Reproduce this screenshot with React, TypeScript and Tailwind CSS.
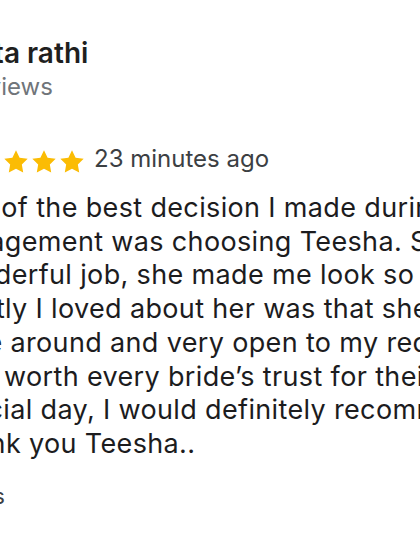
import React from "react";

const Star = () => (
  <svg width="28" height="28" viewBox="0 0 24 24" className="shrink-0">
    <path
      d="M12 2l3.09 6.26L22 9.27l-5 4.87 1.18 6.88L12 17.77l-6.18 3.25L7 14.14 2 9.27l6.91-1.01L12 2z"
      fill="#fbbc04"
    />
  </svg>
);

const lines = [
  "One of the best decision I made during my",
  "engagement was choosing Teesha. She did a",
  "wonderful job, she made me look so beautiful.",
  "Mostly I loved about her was that she was",
  "have around and very open to my requirements.",
  "fully worth every bride’s trust for their",
  "special day, I would definitely recommend her.",
  "Thank you Teesha..",
];

export default function App() {
  return (
    <div className="w-[420px] h-[560px] overflow-hidden bg-white" style={{ fontFamily: "Inter, 'Noto Sans', sans-serif" }}>
      <div className="flex flex-col ml-[-60px] w-[680px] pt-[37px]">
        <div className="ml-[2px] text-[28px] leading-[32px] font-semibold text-[#1f1f1f] whitespace-nowrap">
          Nikita rathi
        </div>
        <div className="mt-[4px] ml-[4px] text-[24px] leading-[28px] text-[#70757a] whitespace-nowrap">
          3 reviews
        </div>
        <div className="mt-[44px] flex items-start">
          <div className="flex ml-[6px] mt-[3px]">
            <Star />
            <Star />
            <Star />
            <Star />
            <Star />
          </div>
          <div className="ml-2 text-[24px] leading-[28px] text-[#3c4043] whitespace-nowrap">
            23 minutes ago
          </div>
        </div>
        <div className="mt-[15px] flex flex-col text-[27px] leading-[33.7px] tracking-[0.35px] text-[#1c1c1e]">
          {lines.map((l, i) => (
            <div key={i} className="whitespace-nowrap">
              {l}
            </div>
          ))}
        </div>
        <div className="mt-[21px] ml-[11px] text-[22px] leading-[28px] text-[#3c4043] whitespace-nowrap">
          Likes
        </div>
      </div>
    </div>
  );
}
